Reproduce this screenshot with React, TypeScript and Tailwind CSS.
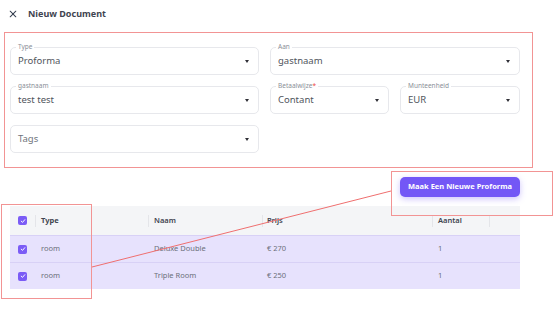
import React from "react";

const font = { fontFamily: '"Noto Sans", "Open Sans", sans-serif' };

function Caret() {
  return <span className="w-0 h-0 border-l-[2.5px] border-r-[2.5px] border-t-[3px] border-l-transparent border-r-transparent border-t-[#2f2f36]" />;
}

function Field({ label, value, required, muted }: { label?: string; value: string; required?: boolean; muted?: boolean }) {
  return (
    <div className="relative h-[28px] rounded-[5px] border border-[#e7e8ec] flex items-center justify-between pl-[7px] pr-[9px]">
      {label && (
        <span className="absolute -top-[5px] left-[5px] bg-white px-[2px] text-[6.5px] leading-[8px] text-[#8a8f98]">
          {label}
          {required && <span className="text-[#ef4444]">*</span>}
        </span>
      )}
      <span className={"text-[9.5px] " + (muted ? "text-[#70747c]" : "text-[#50545c]")}>{value}</span>
      <Caret />
    </div>
  );
}

function Check() {
  return (
    <span className="w-[9px] h-[9px] rounded-[2px] bg-[#7b5cf6] flex items-center justify-center">
      <svg width="6" height="6" viewBox="0 0 10 10">
        <path d="M2 5.2 L4.2 7.3 L8 2.8" stroke="white" strokeWidth="1.6" fill="none" strokeLinecap="round" strokeLinejoin="round" />
      </svg>
    </span>
  );
}

const rows = [
  { type: "room", naam: "Deluxe Double", prijs: "€ 270", aantal: "1" },
  { type: "room", naam: "Triple Room", prijs: "€ 250", aantal: "1" },
];

export default function App() {
  return (
    <div className="relative w-[554px] h-[321px] bg-white overflow-hidden" style={font}>
      <div className="flex items-center h-[28px] pl-[9px] gap-[11px]">
        <svg width="8" height="8" viewBox="0 0 10 10">
          <path d="M1.5 1.5 L8.5 8.5 M8.5 1.5 L1.5 8.5" stroke="#374151" strokeWidth="1.3" strokeLinecap="round" />
        </svg>
        <span className="text-[9px] font-bold text-[#3f4450]">Nieuw Document</span>
      </div>

      <div className="ml-[10px] w-[510px] mt-[19px] grid grid-cols-[249px_250px] gap-x-[11px] gap-y-[11px]">
        <Field label="Type" value="Proforma" />
        <Field label="Aan" value="gastnaam" />
        <Field label="gastnaam" value="test test" />
        <div className="grid grid-cols-[119px_120px] gap-x-[11px]">
          <Field label="Betaalwijze" required value="Contant" />
          <Field label="Munteenheid" value="EUR" />
        </div>
        <Field value="Tags" muted />
      </div>

      <div className="ml-[10px] w-[510px] mt-[24px] flex justify-end">
        <button className="w-[120px] h-[20px] rounded-[5px] bg-[#7357f6] text-white text-[7.5px] font-bold shadow-[0_2px_6px_rgba(115,87,246,0.35)]">
          Maak Een Nieuwe Proforma
        </button>
      </div>

      <div className="ml-[10px] w-[510px] mt-[9px] text-[7.5px]">
        <div className="h-[29px] bg-[#f4f5f7] flex items-center font-bold text-[#3f4450]">
          <div className="w-[25px] h-full flex items-center justify-center"><Check /></div>
          <div className="w-[113px] border-l border-[#e4e5e9] pl-[5px] h-[12px] flex items-center">Type</div>
          <div className="w-[114px] border-l border-[#e4e5e9] pl-[5px] h-[12px] flex items-center font-semibold">Naam</div>
          <div className="w-[170px] border-l border-[#e4e5e9] pl-[4px] h-[12px] flex items-center font-semibold">Prijs</div>
          <div className="w-[57px] border-l border-[#e4e5e9] pl-[5px] h-[12px] flex items-center font-semibold">Aantal</div>
          <div className="flex-1 border-l border-[#e4e5e9] h-[12px]" />
        </div>
        {rows.map((r, i) => (
          <div key={i} className="h-[27px] bg-[#e7e2fd] border-t border-[#d8d1f6] flex items-center text-[#6b6f7a]">
            <div className="w-[25px] flex items-center justify-center"><Check /></div>
            <div className="w-[113px] pl-[6px]">{r.type}</div>
            <div className="w-[114px] pl-[6px]">{r.naam}</div>
            <div className="w-[170px] pl-[5px]">{r.prijs}</div>
            <div className="w-[57px] pl-[6px]">{r.aantal}</div>
          </div>
        ))}
      </div>

      {/* annotation overlays */}
      <div className="absolute left-[4px] top-[32px] w-[529px] h-[136px] border border-[#f29494] pointer-events-none" />
      <div className="absolute left-[391px] top-[171px] w-[162px] h-[45px] border border-[#f29494] pointer-events-none" />
      <div className="absolute left-[1px] top-[204px] w-[91px] h-[95px] border border-[#f29494] pointer-events-none" />
      <svg className="absolute left-0 top-0 pointer-events-none" width="554" height="321">
        <line x1="92" y1="267" x2="391" y2="191" stroke="#ef6f6f" strokeWidth="1" />
      </svg>
    </div>
  );
}
